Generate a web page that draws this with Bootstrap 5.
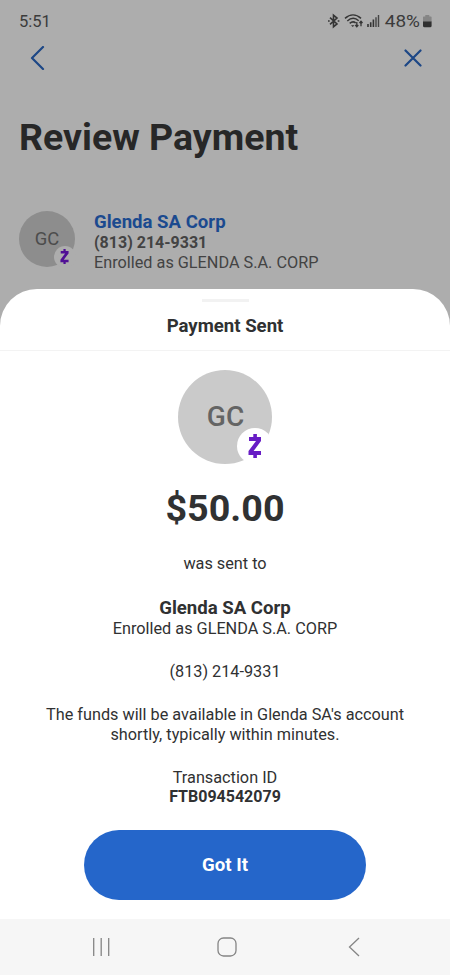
<!DOCTYPE html>
<html lang="en">
<head>
<meta charset="utf-8">
<meta name="viewport" content="width=device-width, initial-scale=1">
<title>Payment Sent</title>
<link href="https://cdn.jsdelivr.net/npm/bootstrap@5.3.0/dist/css/bootstrap.min.css" rel="stylesheet">
<style>
body{font-family:Roboto,"Liberation Sans",sans-serif;font-size:16.25px;line-height:20px;color:#303132;height:975px;overflow:hidden}
svg{display:block;flex:none}
.backdrop-page{height:289px;background:#adadad;color:#434343;box-shadow:0 60px 0 #adadad}
.status-row{height:42px;padding:0 17px 0 19px;font-size:16.5px;color:#3b3b3b}
.clock{padding-top:1px}
.top-row{height:32px;padding:0 28px 0 29px;color:#1d4786}
.page-title{font-size:37.5px;line-height:46px;font-weight:700;color:#272727;margin:40px 0 0 19px}
.payee{margin:51px 0 0 19px;gap:19px}
.avatar-sm{width:56px;height:56px;background:#8d8d8d;color:#4c4c4c;font-size:18.4px}
.badge-sm{position:absolute;width:22px;height:22px;left:34.5px;top:34.5px;background:#adadad}
.payee-name{font-size:18.6px;font-weight:700;color:#1b4a8f;line-height:22px}
.sheet{height:630px;border-radius:37px 37px 0 0;position:relative}
.handle{width:47px;height:3px;background:#f2f2f2;margin:9.5px auto 0}
.sheet-title{height:49px;line-height:48px;font-size:18.6px;font-weight:700;border-bottom:1px solid #f3f3f3}
.avatar-lg{width:94px;height:94px;background:#cacaca;color:#646464;font-size:28px;font-weight:500;margin-top:19px;padding-left:1px}
.badge-lg{position:absolute;width:36px;height:36px;left:59px;top:58px}
.amount{font-size:37.7px;line-height:46px;font-weight:700;margin-top:21.5px}
.sent-to{margin-top:22.5px}
.recipient{font-size:18.6px;line-height:22px;font-weight:700;margin-top:23px}
.gap-line{margin-top:23px}
.tx-id,.payee-phone{font-size:16px}
.tx-id{margin-top:-.5px}
.got-it{width:281.5px;height:70.5px;margin-top:22.6px;padding-top:7px;font-size:18.7px;font-weight:700;background:#2566ca;color:#fff}
.nav-row{height:56px;background:#f6f6f6;color:#858585;padding:0 90px 1px 92px}
.home-key{margin-right:6px}
</style>
</head>
<body>
<div class="backdrop-page d-flex flex-column">
  <div class="status-row d-flex align-items-center justify-content-between">
    <span class="clock">5:51</span>
    <div class="d-flex align-items-center">
      <svg width="106" height="18" viewBox="0 0 106 18" fill="none" stroke="#353535" stroke-width="1.3">
        <path d="M3 5.7l7 6.2L6.5 14.8V3.2L10 6.1 3 12.3M1 9h1.700M10.700 9h1.700" stroke-width="1.6"/>
        <path d="M18 6.4c5-4.6 11-4.6 16 0M20.3 9c3.6-3.3 8-3.3 11.4-.3M22.7 11.4c2-1.8 4.2-1.9 6-.5" stroke-width="1.5"/>
        <path d="M24 13.2h3.5L25.700 15z" fill="#353535" stroke="none"/>
        <path d="M29.800 10v4.300M28.300 13l1.500 1.700 1.500-1.700M34 14.300V9.500M32.500 11L34 9.300l1.500 1.700"/>
        <path d="M41 12v3M43.700 10.300V15M46.400 7.500V15" stroke-width="1.6"/>
        <path d="M49 5.200V15M51.500 3V15" stroke-width="1.4" stroke="#454545"/>
        <path d="M96.700 4.500h1.600V3h4v1.500h1.600q.7 0 .7.7V10h-8.600V5.200q0-.7.7-.7z" fill="#858585" stroke="none"/>
        <path d="M96 9.500h8.600v4.300q0 1.500-1.500 1.500h-5.600q-1.500 0-1.500-1.500z" fill="#303030" stroke="none"/>
        <text x="57.800" y="15.200" fill="#3b3b3b" stroke="none" font-size="17" textLength="35.200" lengthAdjust="spacingAndGlyphs">48%</text>
      </svg>
    </div>
  </div>
  <div class="top-row d-flex align-items-center justify-content-between">
    <svg width="16" height="24" viewBox="0 0 16 24" fill="none" stroke="currentColor" stroke-width="2.2" stroke-linecap="round" stroke-linejoin="round"><path d="M14 1L3 12l11 11"/></svg>
    <svg width="18" height="18" viewBox="0 0 18 18" fill="none" stroke="currentColor" stroke-width="2.2" stroke-linecap="round"><path d="M1.500 1.500l15 15M16.500 1.500l-15 15"/></svg>
  </div>
  <h1 class="page-title">Review Payment</h1>
  <div class="payee d-flex">
    <div class="avatar-sm rounded-circle position-relative d-flex align-items-center justify-content-center flex-shrink-0">GC
      <div class="badge-sm rounded-circle d-flex align-items-center justify-content-center">
        <svg width="9" height="15" viewBox="0 0 14 24" fill="#501095"><path d="M5.300 0h3.600v3H13.500v4L5.800 17h7.700v4H8.900v3H5.300v-3H.5v-4L8 7H1V3h4.300z"/></svg>
      </div>
    </div>
    <div>
      <div class="payee-name">Glenda SA Corp</div>
      <div class="fw-bold payee-phone">(813) 214-9331</div>
      <div>Enrolled as GLENDA S.A. CORP</div>
    </div>
  </div>
</div>
<main class="sheet bg-white text-center d-flex flex-column align-items-center">
  <div class="handle"></div>
  <div class="sheet-title w-100"><span>Payment Sent</span></div>
  <div class="avatar-lg rounded-circle position-relative d-flex align-items-center justify-content-center flex-shrink-0">GC
    <div class="badge-lg rounded-circle bg-white d-flex align-items-center justify-content-center">
      <svg width="14" height="24" viewBox="0 0 14 24" fill="#681dc5"><path d="M5.300 0h3.600v3H13v4L5.600 17H13v4H8.900v3H5.300v-3H.5v-4L8 7H1V3h4.300z"/></svg>
    </div>
  </div>
  <div class="amount"><span>$50.00</span></div>
  <div class="sent-to">was sent to</div>
  <div class="recipient">Glenda SA Corp</div>
  <div>Enrolled as GLENDA S.A. CORP</div>
  <div class="gap-line">(813) 214-9331</div>
  <div class="gap-line">The funds will be available in Glenda SA's account<br>shortly, typically within minutes.</div>
  <div class="gap-line">Transaction ID</div>
  <div class="fw-bold tx-id">FTB094542079</div>
  <button type="button" class="btn got-it rounded-pill">Got It</button>
</main>
<nav class="nav-row d-flex align-items-center justify-content-between" aria-label="System navigation">
  <svg width="19" height="20" viewBox="0 0 19 20" fill="none" stroke="currentColor" stroke-width="1.3"><path d="M1.700 1v18M9.200 1v18M16.700 1v18"/></svg>
  <svg class="home-key" width="20" height="20" viewBox="0 0 20 20" fill="none" stroke="currentColor" stroke-width="1.3"><rect x="1" y="1" width="18" height="18" rx="5.500"/></svg>
  <svg width="12" height="20" viewBox="0 0 12 20" fill="none" stroke="currentColor" stroke-width="1.3"><path d="M11 1L1.500 10l9.500 9"/></svg>
</nav>
<script src="https://cdn.jsdelivr.net/npm/bootstrap@5.3.0/dist/js/bootstrap.bundle.min.js"></script>
</body>
</html>
